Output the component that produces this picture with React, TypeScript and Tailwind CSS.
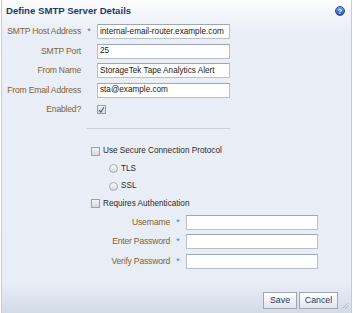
import React from 'react';

const font = { fontFamily: '"Liberation Sans", Arial, sans-serif' };

const Label = ({ text, w }: { text: string; w: string }) => (
    <div className={`${w} shrink-0 text-right text-[8.6px] tracking-[-0.2px] text-[#7e6632] leading-none`}>{text}</div>
);

const Star = () => (
    <div className="w-[16px] shrink-0 text-center text-[9px] leading-none text-[#4d79b8]">*</div>
);

const Field = ({ value, w }: { value?: string; w: string }) => (
    <div className={`${w} h-[15px] shrink-0 bg-white border border-[#b9c0cc] border-t-[#9ea6b3] flex items-center px-[2px] text-[8.2px] text-[#222] leading-none overflow-hidden whitespace-nowrap`}>
        {value}
    </div>
);

const Checkbox = ({ checked }: { checked?: boolean }) => (
    <div className="w-[9px] h-[9px] shrink-0 border border-[#9a9fa8] bg-gradient-to-b from-[#f4f4f4] to-[#d6d8dc] flex items-center justify-center">
        {checked && (
            <svg width="8" height="8" viewBox="0 0 8 8">
                <path d="M1.2 4.2 L3.2 6.4 L6.8 0.8" fill="none" stroke="#3b5b9a" strokeWidth="1.3" />
            </svg>
        )}
    </div>
);

const Radio = () => (
    <div className="w-[9px] h-[9px] shrink-0 rounded-full border border-[#a3a7ae] bg-gradient-to-b from-[#fafafa] to-[#d8dade]" />
);

export default function App() {
    return (
        <div style={font} className="w-[353px] h-[313px] bg-white pl-[1px] overflow-hidden">
            <div className="w-[351px] h-[313px] flex flex-col border-l border-r border-[#c6ccd6] bg-gradient-to-b from-[#fdfdfe] via-[#eaeef6] via-[10%] to-[#e9edf6] relative">
                {/* header */}
                <div className="h-[22px] shrink-0 flex items-center justify-between pl-[4px] pr-[6px]">
                    <div className="text-[9.6px] font-bold text-[#1d3b6b] leading-none">Define SMTP Server Details</div>
                    <div className="w-[10px] h-[10px] rounded-full bg-gradient-to-b from-[#7aa7e6] to-[#1e4fa6] border border-[#2a4f8f] flex items-center justify-center text-white text-[7px] font-bold leading-none">?</div>
                </div>

                {/* main fields */}
                <div className="flex flex-col">
                    <div className="h-[19.5px] flex items-center">
                        <Label text="SMTP Host Address" w="w-[79px]" />
                        <Star />
                        <Field value="internal-email-router.example.com" w="w-[133px]" />
                    </div>
                    <div className="h-[19.5px] flex items-center">
                        <Label text="SMTP Port" w="w-[79px]" />
                        <div className="w-[16px] shrink-0" />
                        <Field value="25" w="w-[133px]" />
                    </div>
                    <div className="h-[19.5px] flex items-center">
                        <Label text="From Name" w="w-[79px]" />
                        <div className="w-[16px] shrink-0" />
                        <Field value="StorageTek Tape Analytics Alert" w="w-[133px]" />
                    </div>
                    <div className="h-[19.5px] flex items-center">
                        <Label text="From Email Address" w="w-[79px]" />
                        <div className="w-[16px] shrink-0" />
                        <Field value="sta@example.com" w="w-[133px]" />
                    </div>
                    <div className="h-[19.5px] flex items-center">
                        <Label text="Enabled?" w="w-[79px]" />
                        <div className="w-[16px] shrink-0" />
                        <Checkbox checked />
                    </div>
                </div>

                {/* separator */}
                <div className="ml-[85px] mt-[8px] w-[143px] h-px bg-[#c9ced7]" />

                {/* options */}
                <div className="flex flex-col ml-[89px] mt-[14px] text-[8.2px] text-[#2a2a2a] leading-none">
                    <div className="h-[17.5px] flex items-center gap-[3px]">
                        <Checkbox />
                        <span>Use Secure Connection Protocol</span>
                    </div>
                    <div className="h-[17.5px] flex items-center gap-[3px] pl-[18px]">
                        <Radio />
                        <span>TLS</span>
                    </div>
                    <div className="h-[17.5px] flex items-center gap-[3px] pl-[18px]">
                        <Radio />
                        <span>SSL</span>
                    </div>
                    <div className="h-[17.5px] flex items-center gap-[3px]">
                        <Checkbox />
                        <span>Requires Authentication</span>
                    </div>
                </div>

                {/* auth fields */}
                <div className="flex flex-col">
                    <div className="h-[19.5px] flex items-center">
                        <Label text="Username" w="w-[168px]" />
                        <Star />
                        <Field w="w-[132px]" />
                    </div>
                    <div className="h-[19.5px] flex items-center">
                        <Label text="Enter Password" w="w-[168px]" />
                        <Star />
                        <Field w="w-[132px]" />
                    </div>
                    <div className="h-[19.5px] flex items-center">
                        <Label text="Verify Password" w="w-[168px]" />
                        <Star />
                        <Field w="w-[132px]" />
                    </div>
                </div>

                {/* footer */}
                <div className="mt-auto h-[30px] bg-gradient-to-b from-[#e9edf6] to-[#d3dbe7] flex items-center justify-end gap-[2px] pr-[13px] pt-[4px]">
                    <button className="h-[17px] w-[34px] border border-[#9ea6b4] bg-gradient-to-b from-[#ffffff] to-[#e2e6ee] text-[8.8px] text-[#1f3966] leading-none">Save</button>
                    <button className="h-[17px] w-[39px] border border-[#9ea6b4] bg-gradient-to-b from-[#ffffff] to-[#e2e6ee] text-[8.8px] text-[#1f3966] leading-none">Cancel</button>
                </div>
                <svg className="absolute right-[2px] bottom-[3px]" width="8" height="8" viewBox="0 0 8 8">
                    <path d="M7 1 L1 7 M7 4 L4 7 M7 6.5 L6.5 7" stroke="#b3bac6" strokeWidth="1" />
                </svg>
            </div>
        </div>
    );
}
